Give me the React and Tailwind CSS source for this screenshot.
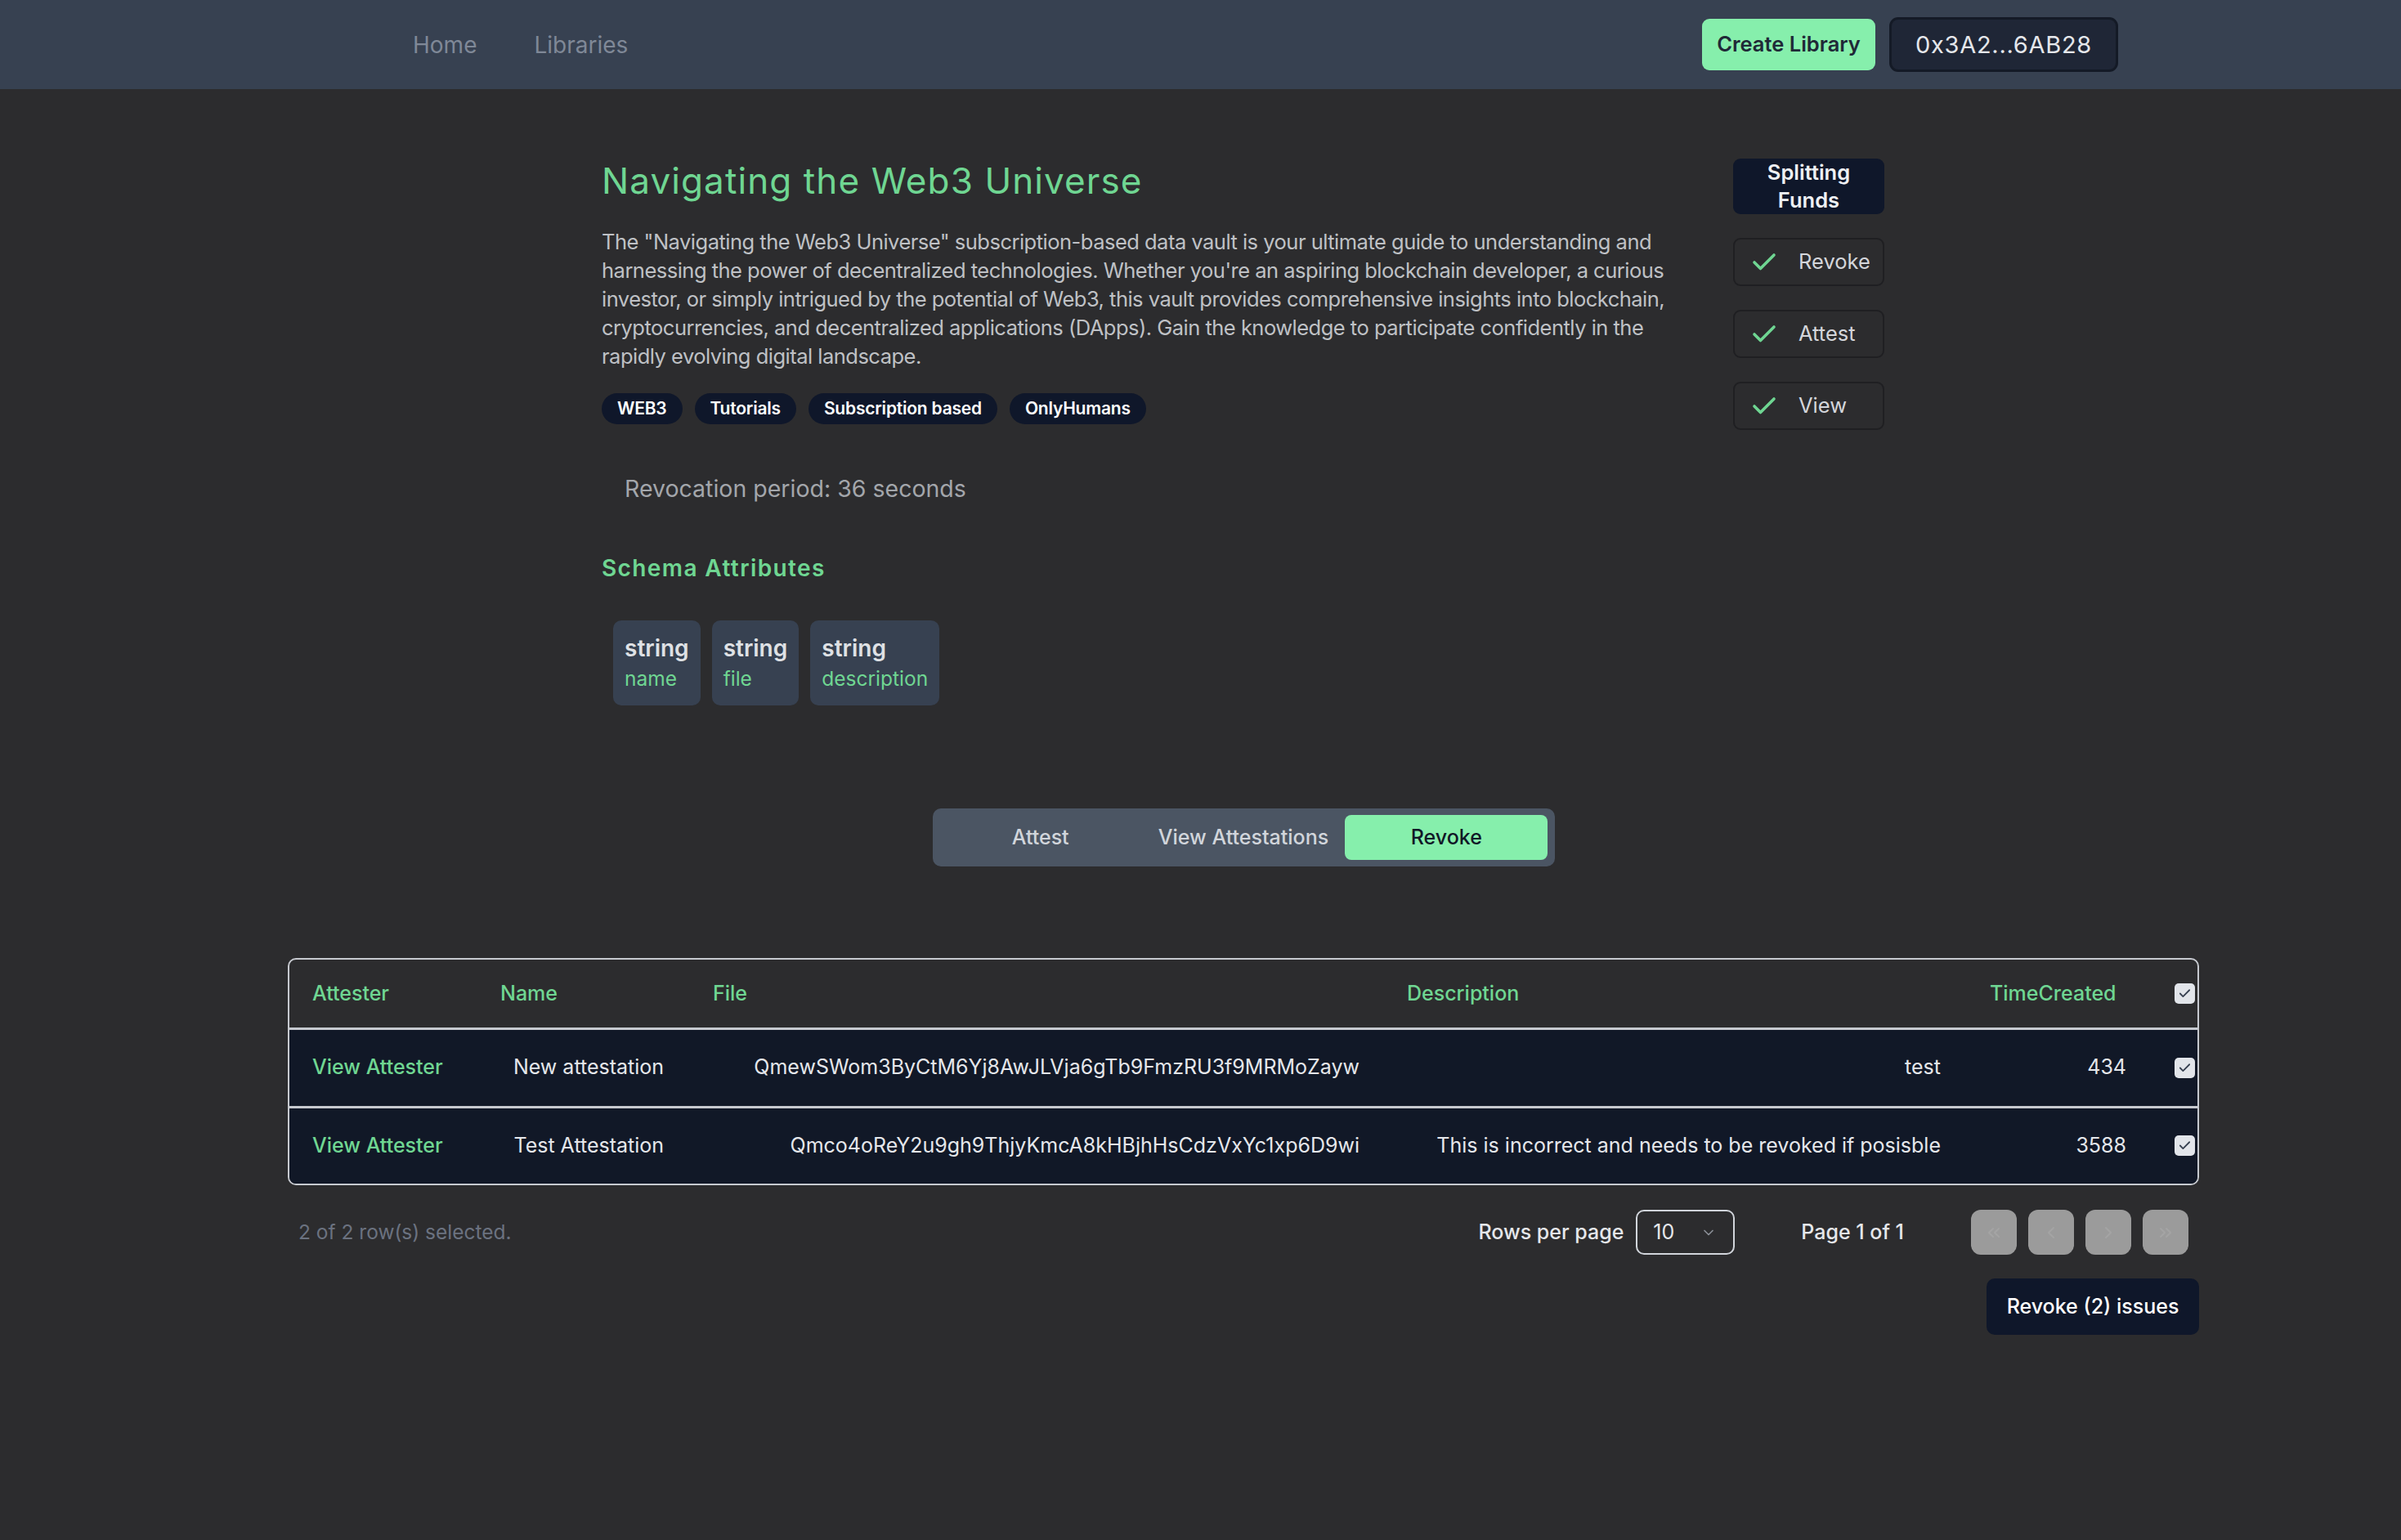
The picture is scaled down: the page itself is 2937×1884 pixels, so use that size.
import React from 'react';
import { Check, ChevronDown, ChevronLeft, ChevronRight, ChevronsLeft, ChevronsRight } from 'lucide-react';

const tags = ['WEB3', 'Tutorials', 'Subscription based', 'OnlyHumans'];

const attributes = [
  { type: 'string', name: 'name' },
  { type: 'string', name: 'file' },
  { type: 'string', name: 'description' },
];

const rows = [
  {
    name: 'New attestation',
    file: 'QmewSWom3ByCtM6Yj8AwJLVja6gTb9FmzRU3f9MRMoZayw',
    description: 'test',
    time: '434',
  },
  {
    name: 'Test Attestation',
    file: 'Qmco4oReY2u9gh9ThjyKmcA8kHBjhHsCdzVxYc1xp6D9wi',
    description: 'This is incorrect and needs to be revoked if posisble',
    time: '3588',
  },
];

const Checkbox = () => (
  <div className="w-[25px] h-[25px] rounded-[5px] bg-[#e2e5ea] flex items-center justify-center">
    <Check size={17} strokeWidth={2.5} className="text-[#374151]" />
  </div>
);

function Header() {
  return (
    <header className="h-[109px] bg-[#374151] flex items-center pl-[505px] pr-[346px]">
      <nav className="flex items-center gap-[70px] text-[28px] text-[#7f8897]">
        <a href="#">Home</a>
        <a href="#">Libraries</a>
      </nav>
      <div className="ml-auto flex items-center gap-[17px]">
        <button className="h-[63px] w-[212px] rounded-[9px] bg-[#86efac] text-[25.5px] font-semibold text-[#1f2937]">
          Create Library
        </button>
        <button className="h-[67px] w-[280px] rounded-[11px] bg-[#1f2636] border-[3px] border-[#141a26] text-[29px] tracking-wide text-[#e5e7eb]">
          0x3A2...6AB28
        </button>
      </div>
    </header>
  );
}

function Sidebar() {
  const actions = ['Revoke', 'Attest', 'View'];
  return (
    <aside className="w-[185px] pt-[6px] flex flex-col gap-[29px]">
      <div className="h-[68px] rounded-[9px] bg-[#0f172a] flex items-center justify-center text-center text-[25.5px] leading-[34px] font-semibold text-[#eef0f3]">
        Splitting
        <br />
        Funds
      </div>
      {actions.map((a) => (
        <div
          key={a}
          className="h-[59px] rounded-[9px] border-2 border-[#1f1f22] flex items-center pl-[18px] gap-[24px] text-[25.5px] text-[#d4d6db]"
        >
          <Check size={36} strokeWidth={2.4} className="text-[#6fd692]" />
          <span>{a}</span>
        </div>
      ))}
    </aside>
  );
}

function Overview() {
  return (
    <div className="flex pl-[736px] pt-[79px]">
      <div className="w-[1330px]">
        <h1 className="text-[44px] leading-[66px] tracking-wide text-[#6fd692]">Navigating the Web3 Universe</h1>
        <p className="mt-[24px] text-[25.5px] leading-[35px] tracking-[-0.02em] text-[#bfc1c5] pr-[10px]">
          The "Navigating the Web3 Universe" subscription-based data vault is your ultimate guide to understanding and
          harnessing the power of decentralized technologies. Whether you're an aspiring blockchain developer, a curious
          investor, or simply intrigued by the potential of Web3, this vault provides comprehensive insights into blockchain,
          cryptocurrencies, and decentralized applications (DApps). Gain the knowledge to participate confidently in the
          rapidly evolving digital landscape.
        </p>
        <div className="mt-[28px] flex gap-[15px]">
          {tags.map((t) => (
            <span
              key={t}
              className="h-[38px] px-[19px] rounded-full bg-[#0f172a] flex items-center text-[21px] font-semibold tracking-[-0.01em] text-white"
            >
              {t}
            </span>
          ))}
        </div>
        <div className="mt-[56px] pl-[28px] text-[28.5px] leading-[45px] text-[#a3a6ab]">Revocation period: 36 seconds</div>
        <h2 className="mt-[54px] text-[28px] leading-[42px] font-semibold tracking-wider text-[#6fd692]">
          Schema Attributes
        </h2>
        <div className="mt-[43px] ml-[14px] flex gap-[14px]">
          {attributes.map((attr) => (
            <div
              key={attr.name}
              className="h-[104px] min-w-[105px] rounded-[10px] bg-[#374151] px-[14px] pt-[15px] flex flex-col"
            >
              <span className="text-[28px] leading-[38px] font-semibold text-[#dfe1e5]">{attr.type}</span>
              <span className="text-[24.5px] leading-[36px] text-[#6fd692]">{attr.name}</span>
            </div>
          ))}
        </div>
      </div>
      <div className="ml-[54px]">
        <Sidebar />
      </div>
    </div>
  );
}

function Tabs() {
  const tabs = ['Attest', 'View Attestations', 'Revoke'];
  return (
    <div className="flex justify-center">
      <div className="w-[761px] h-[71px] rounded-[10px] bg-[#4b5563] p-[8px] grid grid-cols-3">
        {tabs.map((t) => (
          <button
            key={t}
            className={
              t === 'Revoke'
                ? 'rounded-[8px] bg-[#86efac] text-[25px] font-medium text-[#111827]'
                : 'rounded-[8px] text-[25px] font-medium text-[#d1d5db]'
            }
          >
            {t}
          </button>
        ))}
      </div>
    </div>
  );
}

function AttestationTable() {
  return (
    <div className="rounded-[10px] border-2 border-[#c6c9cf] overflow-hidden">
      <table className="w-full table-fixed text-[25px]">
        <colgroup>
          <col className="w-[228px]" />
          <col className="w-[260px]" />
          <col className="w-[851px]" />
          <col className="w-[711px]" />
          <col className="w-[227px]" />
          <col className="w-[57px]" />
        </colgroup>
        <thead>
          <tr className="h-[84px] border-b-[3px] border-[#c6c9cf] text-left font-medium text-[#6fd692]">
            <th className="pl-[28px] font-medium">Attester</th>
            <th className="pl-[30px] font-medium">Name</th>
            <th className="pl-[30px] font-medium">File</th>
            <th className="pl-[28px] font-medium">Description</th>
            <th className="pl-[30px] font-medium">TimeCreated</th>
            <th className="pl-[29px]">
              <Checkbox />
            </th>
          </tr>
        </thead>
        <tbody>
          {rows.map((r, i) => (
            <tr
              key={r.file}
              className={
                i === 0
                  ? 'h-[96px] bg-[#111827] border-b-[3px] border-[#c6c9cf] text-[#e5e7eb]'
                  : 'h-[94px] bg-[#111827] text-[#e5e7eb]'
              }
            >
              <td className="pl-[28px] font-medium text-[#6fd692]">View Attester</td>
              <td className="px-[30px] text-right">{r.name}</td>
              <td className="px-[30px] text-right">{r.file}</td>
              <td className="px-[30px] text-right">{r.description}</td>
              <td className="px-[30px] text-right">{r.time}</td>
              <td className="pl-[29px]">
                <Checkbox />
              </td>
            </tr>
          ))}
        </tbody>
      </table>
    </div>
  );
}

function Pagination() {
  const icons = [ChevronsLeft, ChevronLeft, ChevronRight, ChevronsRight];
  return (
    <div className="mt-[30px] flex items-center justify-between pl-[13px] pr-[13px]">
      <span className="text-[24.5px] text-[#6b7280]">2 of 2 row(s) selected.</span>
      <div className="flex items-center">
        <div className="flex items-center gap-[15px]">
          <span className="text-[25px] font-medium text-[#e5e7eb]">Rows per page</span>
          <div className="w-[121px] h-[55px] rounded-[10px] border-2 border-[#d1d5db] flex items-center justify-between pl-[19px] pr-[20px]">
            <span className="text-[25px] text-[#e5e7eb]">10</span>
            <ChevronDown size={20} className="text-[#8b8f97]" />
          </div>
        </div>
        <span className="ml-[81px] text-[25px] font-medium text-[#e5e7eb]">Page 1 of 1</span>
        <div className="ml-[82px] flex gap-[14px]">
          {icons.map((Icon, i) => (
            <button key={i} className="w-[56px] h-[55px] rounded-[12px] bg-[#9b9b9b] flex items-center justify-center">
              <Icon size={24} className="text-[#a4a4a4]" />
            </button>
          ))}
        </div>
      </div>
    </div>
  );
}

export default function App() {
  return (
    <div className="min-h-screen bg-[#2c2c2e]" style={{ fontFamily: 'Inter, "Noto Sans", sans-serif' }}>
      <Header />
      <Overview />
      <section className="ml-[352px] w-[2338px] mt-[126px] pb-[250px]">
        <Tabs />
        <div className="mt-[112px]">
          <AttestationTable />
        </div>
        <Pagination />
        <div className="mt-[29px] flex justify-end">
          <button className="w-[260px] h-[69px] rounded-[10px] bg-[#0f172a] text-[25px] font-medium text-white">
            Revoke (2) issues
          </button>
        </div>
      </section>
    </div>
  );
}
